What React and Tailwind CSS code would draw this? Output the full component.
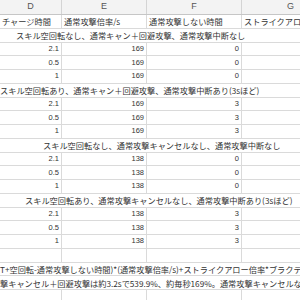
import React from "react";

const cols = ["w-[62px]", "w-[85px]", "w-[95px]", "w-[98px]"];
const jp = { fontFamily: '"Noto Sans CJK JP", "Noto Sans", sans-serif' };

const groups = [
  { title: "スキル空回転なし、通常キャン＋回避攻撃、通常攻撃中断なし", pad: "pl-[16px]", rate: 169, stop: 0 },
  { title: "スキル空回転あり、通常キャン＋回避攻撃、通常攻撃中断あり(3sほど)", pad: "pl-0", rate: 169, stop: 3 },
  { title: "スキル空回転なし、通常攻撃キャンセルなし、通常攻撃中断なし", pad: "pl-[43px]", rate: 138, stop: 0 },
  { title: "スキル空回転あり、通常攻撃キャンセルなし、通常攻撃中断あり(3sほど)", pad: "pl-[25px]", rate: 138, stop: 3 },
];

const Cell = ({ i, children, right }) => (
  <div
    className={`${cols[i]} shrink-0 h-full border-r border-[#dadada] flex items-center px-[2px] ${
      right ? "justify-end" : "justify-start"
    }`}
  >
    {children}
  </div>
);

const Row = ({ children }) => (
  <div className="flex h-[13.75px] border-b border-[#dadada] shrink-0">{children}</div>
);

const WideRow = ({ pad, children }) => (
  <div className="h-[13.75px] border-b border-[#dadada] shrink-0 flex items-center">
    <span className={`${pad} whitespace-nowrap text-[8.2px] leading-[12px]`} style={jp}>
      {children}
    </span>
  </div>
);

const NumRow = ({ d, e, f }) => (
  <Row>
    <Cell i={0} right>{d}</Cell>
    <Cell i={1} right>{e}</Cell>
    <Cell i={2} right>{f}</Cell>
    <Cell i={3} />
  </Row>
);

export default function App() {
  return (
    <div
      className="w-[300px] h-[300px] overflow-hidden bg-white text-[#333] flex flex-col"
      style={{ fontFamily: '"Liberation Sans", Arial, sans-serif' }}
    >
      <div className="flex h-[15px] bg-[#f3f3f3] border-b border-[#c6c6c6] shrink-0 text-[#555] text-[9px]">
        {["D", "E", "F", "G"].map((c, i) => (
          <div key={c} className={`${cols[i]} shrink-0 border-r border-[#d4d4d4] flex items-center justify-center`}>
            {c}
          </div>
        ))}
      </div>
      <div className="flex flex-col text-[7.5px] leading-[12px]">
        <Row>
          {["チャージ時間", "通常攻撃倍率/s", "通常攻撃しない時間", "ストライクアロー倍率"].map((t, i) => (
            <Cell key={i} i={i}>
              <span className="whitespace-nowrap text-[8.2px] leading-[12px]" style={jp}>{t}</span>
            </Cell>
          ))}
        </Row>
        {groups.map((g) => (
          <React.Fragment key={g.title}>
            <WideRow pad={g.pad}>{g.title}</WideRow>
            <NumRow d="2.1" e={g.rate} f={g.stop} />
            <NumRow d="0.5" e={g.rate} f={g.stop} />
            <NumRow d="1" e={g.rate} f={g.stop} />
          </React.Fragment>
        ))}
        <NumRow d="" e="" f="" />
        <WideRow pad="pl-0">T+空回転-通常攻撃しない時間)*(通常攻撃倍率/s)+ストライクアロー倍率*ブラクティス</WideRow>
        <WideRow pad="pl-0">撃キャンセル＋回避攻撃は約3.2sで539.9%、約毎秒169%。通常攻撃キャンセルなし</WideRow>
        <NumRow d="" e="" f="" />
      </div>
    </div>
  );
}
